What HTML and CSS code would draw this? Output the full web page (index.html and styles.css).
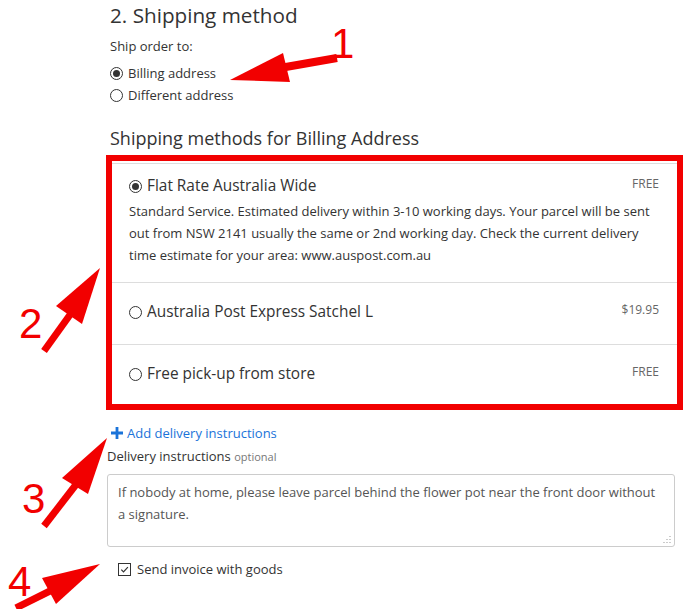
FILE: index.html
```html
<!DOCTYPE html>
<html>
<head>
<meta charset="utf-8">
<link rel="stylesheet" href="styles.css">
</head>
<body>
<main class="page">
  <h2 class="title">2. Shipping method</h2>
  <div class="ship-to">
    <div class="label">Ship order to:</div>
    <label class="opt"><span class="radio checked"></span>Billing address</label>
    <label class="opt"><span class="radio"></span>Different address</label>
  </div>
  <h3 class="subtitle">Shipping methods for Billing Address</h3>
  <div class="methods">
    <div class="method">
      <div class="method-head">
        <span class="radio big checked"></span>
        <span class="method-name">Flat Rate Australia Wide</span>
        <span class="price">FREE</span>
      </div>
      <p class="method-desc">Standard Service. Estimated delivery within 3-10 working days. Your parcel will be sent out from NSW 2141 usually the same or 2nd working day. Check the current delivery time estimate for your area: www.auspost.com.au</p>
    </div>
    <div class="method">
      <div class="method-head">
        <span class="radio big"></span>
        <span class="method-name">Australia Post Express Satchel L</span>
        <span class="price">$19.95</span>
      </div>
    </div>
    <div class="method">
      <div class="method-head">
        <span class="radio big"></span>
        <span class="method-name">Free pick-up from store</span>
        <span class="price">FREE</span>
      </div>
    </div>
  </div>
  <a class="add-link"><svg class="plus" viewBox="0 0 12 12" width="12" height="12"><path d="M4.6 0h2.8v4.6H12v2.8H7.4V12H4.6V7.4H0V4.6h4.6z" fill="#1a73d9"/></svg>Add delivery instructions</a>
  <div class="field-label">Delivery instructions <span class="optional">optional</span></div>
  <div class="textarea">If nobody at home, please leave parcel behind the flower pot near the front door without a signature.<svg class="grip" viewBox="0 0 8 8" width="8" height="8"><path d="M7 1v1M7 4v1M4 4v1M7 7v1M4 7v1M1 7v1" stroke="#aaa" stroke-width="1.2"/></svg></div>
  <label class="check"><span class="box"><svg viewBox="0 0 12 12" width="12" height="12"><path d="M2.5 6.2l2.4 2.5 4.8-5.3" fill="none" stroke="#333" stroke-width="1.3"/></svg></span>Send invoice with goods</label>
</main>
<svg class="annot" viewBox="0 0 697 609" width="697" height="609">
  <g fill="#f20000" stroke="#f20000">
    <rect x="109" y="158" width="571" height="249" fill="none" stroke-width="6"/>
    <line x1="337" y1="58" x2="280" y2="68" stroke-width="8"/>
    <polygon points="230,80 283,53 290,82" stroke="none"/>
    <line x1="44" y1="351" x2="72" y2="312" stroke-width="7"/>
    <polygon points="100,268 56,306 82,324" stroke="none"/>
    <line x1="44" y1="526" x2="78" y2="482" stroke-width="7"/>
    <polygon points="107,438 62,478 88,494" stroke="none"/>
    <line x1="16" y1="608" x2="52" y2="590" stroke-width="7"/>
    <polygon points="100,564 42,578 56,604" stroke="none"/>
  </g>
  <g fill="#f20000" font-family="Liberation Sans, sans-serif" font-size="42">
    <text x="331" y="58">1</text>
    <text x="19" y="338">2</text>
    <text x="22" y="513">3</text>
    <text x="8" y="596">4</text>
  </g>
</svg>
</body>
</html>
```
FILE: styles.css
```css
html, body { margin: 0; padding: 0; background: #fff; }
body {
  font-family: "Open Sans", "Noto Sans", sans-serif;
  color: #333;
  font-size: 13px;
  width: 697px;
  height: 609px;
  overflow: hidden;
  position: relative;
}
.page {
  padding-left: 107px;
  width: 572px;
  display: flex;
  flex-direction: column;
}
.title {
  margin: 1px 0 0 3px;
  font-weight: 400;
  font-size: 20.7px;
  line-height: 28px;
  color: #333;
}
.ship-to {
  margin: 8px 0 0 3px;
  display: flex;
  flex-direction: column;
}
.label { line-height: 18px; margin-bottom: 7px; }
.opt {
  display: flex;
  align-items: center;
  line-height: 22px;
}
.radio {
  box-sizing: border-box;
  width: 13px;
  height: 13px;
  border: 1px solid #333;
  border-radius: 50%;
  margin-right: 5px;
  position: relative;
  flex: none;
}
.radio.checked::after {
  content: "";
  position: absolute;
  left: 2px; top: 2px;
  width: 7px; height: 7px;
  border-radius: 50%;
  background: #333;
}
.subtitle {
  margin: 19px 0 12px 3px;
  font-weight: 400;
  font-size: 18px;
  line-height: 26px;
}
.methods {
  margin: 0 0 0 2px;
  border: 1px solid #ddd;
  display: flex;
  flex-direction: column;
}
.method {
  padding: 18px 19px 21px 19px;
  border-top: 1px solid #ddd;
}
.method:first-child { border-top: none; padding-top: 11px; padding-bottom: 16px; }
.method-head {
  display: flex;
  align-items: center;
}
.method-name { font-size: 15.4px; line-height: 22px; flex: 1; }
.price {
  font-size: 12px;
  color: #666;
  align-self: flex-start;
  line-height: 18px;
}
.method-desc {
  margin: 3px 0 0;
  font-size: 13px;
  line-height: 22px;
}
.add-link {
  margin: 16px 0 0 4px;
  color: #1a73d9;
  display: flex;
  align-items: center;
  font-size: 13px;
  line-height: 20px;
}
.plus { margin-right: 4px; }
.field-label {
  margin-top: 4px;
  line-height: 18px;
}
.optional { font-size: 11px; color: #777; }
.textarea {
  margin-top: 8px;
  box-sizing: border-box;
  height: 73px;
  width: 568px;
  border: 1px solid #ccc;
  border-radius: 3px;
  padding: 6px 10px;
  line-height: 22px;
  color: #555;
  position: relative;
}
.grip { position: absolute; right: 3px; bottom: 3px; }
.check {
  margin: 12px 0 0 11px;
  display: flex;
  align-items: center;
  line-height: 20px;
}
.box {
  box-sizing: border-box;
  width: 13px; height: 13px;
  border: 1px solid #333;
  margin-right: 6px;
  display: flex;
  align-items: center;
  justify-content: center;
}
.box svg { width: 11px; height: 11px; }
.annot { position: absolute; left: 0; top: 0; pointer-events: none; }
```
